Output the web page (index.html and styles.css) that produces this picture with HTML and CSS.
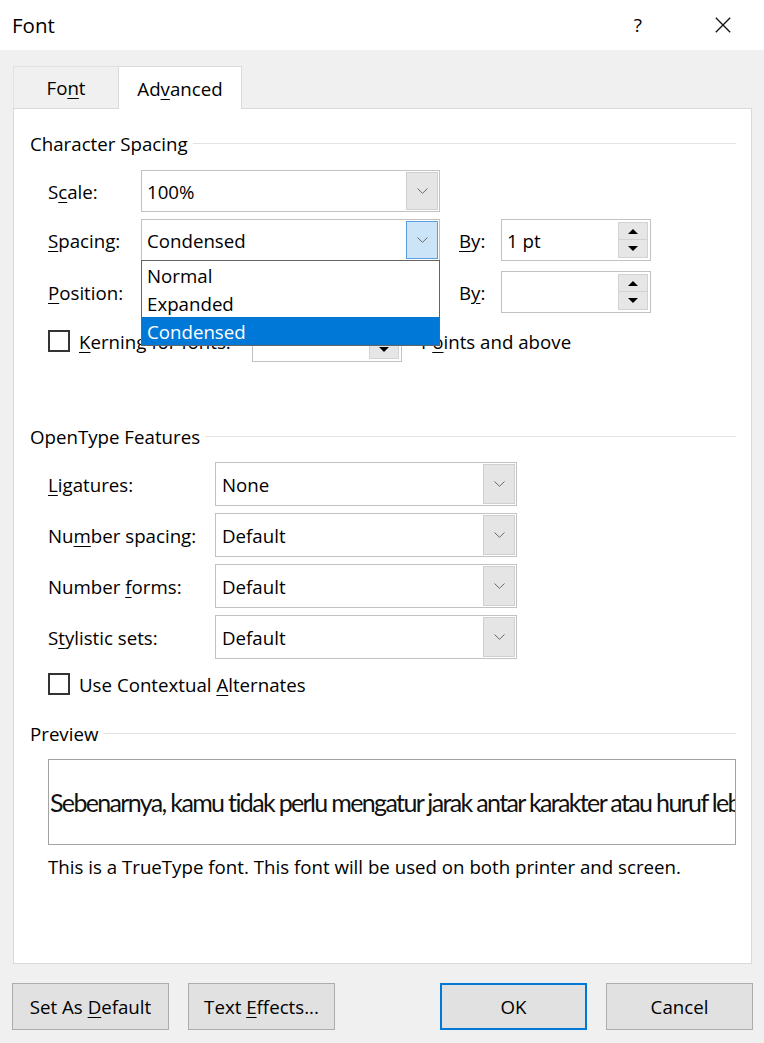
FILE: index.html
```html
<!DOCTYPE html>
<html lang="en">
<head>
<meta charset="utf-8">
<title>Font</title>
<link rel="stylesheet" href="styles.css">
</head>
<body>
<div class="dialog">
  <header class="titlebar">
    <span class="title">Font</span>
    <div class="title-ctrls">
      <span class="help">?</span>
      <svg class="close" width="16" height="16" viewBox="0 0 16 16"><path d="M0.8 0.8 L15.2 15.2 M15.2 0.8 L0.8 15.2" stroke="#111" stroke-width="1.3" fill="none"/></svg>
    </div>
  </header>

  <div class="tabs">
    <div class="tab">Fo<u>n</u>t</div>
    <div class="tab active">Ad<u>v</u>anced</div>
  </div>

  <div class="panel">
    <div class="group-head gh1"><span>Character Spacing</span><i class="rule"></i></div>

    <div class="row r-scale">
      <span class="lbl w1">S<u>c</u>ale:</span>
      <div class="combo c1"><span class="val">100%</span><span class="drop"><svg width="11" height="6" viewBox="0 0 11 6"><path d="M0.5 0.5 L5.5 5.3 L10.5 0.5" stroke="#6a6a6a" stroke-width="1" fill="none"/></svg></span></div>
    </div>

    <div class="row r-spacing">
      <span class="lbl w1"><u>S</u>pacing:</span>
      <div class="combo c1 focus"><span class="val">Condensed</span><span class="drop hot"><svg width="11" height="6" viewBox="0 0 11 6"><path d="M0.5 0.5 L5.5 5.3 L10.5 0.5" stroke="#6a6a6a" stroke-width="1" fill="none"/></svg></span>
        <ul class="list">
          <li>Normal</li>
          <li>Expanded</li>
          <li class="sel">Condensed</li>
        </ul>
      </div>
      <span class="lbl by"><u>B</u>y:</span>
      <div class="spin"><span class="val">1 pt</span><span class="spin-btns"><span class="sb"><i class="up"></i></span><span class="sb"><i class="dn"></i></span></span></div>
    </div>

    <div class="row r-position">
      <span class="lbl w1"><u>P</u>osition:</span>
      <div class="combo c1"><span class="val"></span><span class="drop"></span></div>
      <span class="lbl by">B<u>y</u>:</span>
      <div class="spin"><span class="val"></span><span class="spin-btns"><span class="sb"><i class="up"></i></span><span class="sb"><i class="dn"></i></span></span></div>
    </div>

    <div class="row r-kern">
      <span class="check"></span>
      <span class="lbl kern"><u>K</u>erning for fonts:</span>
      <div class="spin"><span class="val"></span><span class="spin-btns"><span class="sb"><i class="up"></i></span><span class="sb"><i class="dn"></i></span></span></div>
      <span class="lbl pts">P<u>o</u>ints and above</span>
    </div>

    <div class="group-head gh2"><span>OpenType Features</span><i class="rule"></i></div>

    <div class="row ot first">
      <span class="lbl w2"><u>L</u>igatures:</span>
      <div class="combo c2"><span class="val">None</span><span class="drop"><svg width="11" height="6" viewBox="0 0 11 6"><path d="M0.5 0.5 L5.5 5.3 L10.5 0.5" stroke="#6a6a6a" stroke-width="1" fill="none"/></svg></span></div>
    </div>
    <div class="row ot">
      <span class="lbl w2">Nu<u>m</u>ber spacing:</span>
      <div class="combo c2"><span class="val">Default</span><span class="drop"><svg width="11" height="6" viewBox="0 0 11 6"><path d="M0.5 0.5 L5.5 5.3 L10.5 0.5" stroke="#6a6a6a" stroke-width="1" fill="none"/></svg></span></div>
    </div>
    <div class="row ot">
      <span class="lbl w2">Number <u>f</u>orms:</span>
      <div class="combo c2"><span class="val">Default</span><span class="drop"><svg width="11" height="6" viewBox="0 0 11 6"><path d="M0.5 0.5 L5.5 5.3 L10.5 0.5" stroke="#6a6a6a" stroke-width="1" fill="none"/></svg></span></div>
    </div>
    <div class="row ot">
      <span class="lbl w2">S<u>t</u>ylistic sets:</span>
      <div class="combo c2"><span class="val">Default</span><span class="drop"><svg width="11" height="6" viewBox="0 0 11 6"><path d="M0.5 0.5 L5.5 5.3 L10.5 0.5" stroke="#6a6a6a" stroke-width="1" fill="none"/></svg></span></div>
    </div>

    <div class="row r-ctx">
      <span class="check"></span>
      <span class="lbl ctx">Use Contextual <u>A</u>lternates</span>
    </div>

    <div class="group-head gh3"><span>Preview</span><i class="rule"></i></div>

    <div class="preview"><span>Sebenarnya, kamu tidak perlu mengatur jarak antar karakter atau huruf lebih dulu.</span></div>

    <p class="desc">This is a TrueType font. This font will be used on both printer and screen.</p>
  </div>

  <div class="actions">
    <button class="btn wide">Set As <u>D</u>efault</button>
    <button class="btn">Text <u>E</u>ffects...</button>
    <span class="spacer"></span>
    <button class="btn primary">OK</button>
    <button class="btn">Cancel</button>
  </div>
</div>
</body>
</html>
```

FILE: styles.css
```css
* { box-sizing: border-box; }
html, body { margin: 0; padding: 0; }
body {
  width: 764px;
  height: 1043px;
  overflow: hidden;
  background: #f0f0f0;
  font-family: "Open Sans", "Noto Sans", sans-serif;
  font-size: 18.7px;
  color: #000;
}
u { text-decoration: underline; text-decoration-thickness: 1px; text-underline-offset: 3px; }

.titlebar {
  height: 50px;
  background: #fff;
  display: flex;
  align-items: center;
  padding-left: 12px;
}
.title { font-size: 20.5px; }
.title-ctrls { margin-left: auto; display: flex; align-items: center; }
.help { font-size: 19px; margin-right: 73px; }
.close { width: 16px; height: 16px; margin-right: 33px; }

.tabs {
  display: flex;
  align-items: flex-end;
  margin: 16px 0 0 13px;
  height: 42px;
}
.tab {
  width: 105px;
  height: 42px;
  display: flex;
  align-items: center;
  justify-content: center;
  border-top: 1px solid #e2e2e2;
  border-left: 1px solid #e2e2e2;
  background: #f0f0f0;
}
.tab.active {
  width: 124px;
  height: 43px;
  margin-bottom: -1px;
  background: #fff;
  border: 1px solid #dadada;
  border-bottom: none;
  position: relative;
  z-index: 2;
}

.panel {
  margin-left: 13px;
  width: 739px;
  height: 856px;
  background: #fff;
  border: 1px solid #dadada;
  padding: 0 15px 0 16px;
  display: flex;
  flex-direction: column;
}

.group-head { display: flex; align-items: center; height: 24px; flex: none; }
.group-head .rule { flex: 1; height: 1px; background: #e3e3e3; margin-left: 5px; }
.gh1 { margin-top: 22px; }
.gh2 { margin-top: 62px; }
.gh3 { margin-top: 25px; }

.row { display: flex; align-items: center; height: 42px; padding-left: 18px; flex: none; }
.r-scale { margin-top: 15px; }
.r-spacing { margin-top: 7px; position: relative; z-index: 3; }
.r-position { margin-top: 10px; }
.r-kern { margin-top: 7px; }

.lbl { white-space: nowrap; }
.w1 { width: 93px; }
.w2 { width: 167px; }
.by { width: 42px; margin-left: 19px; }
.kern { width: 173px; margin-left: 9px; }
.pts { margin-left: 19px; }
.ctx { margin-left: 9px; }

.combo {
  position: relative;
  display: flex;
  align-items: center;
  height: 42px;
  background: #fff;
  border: 1px solid #c2c2c2;
}
.c1 { width: 299px; }
.c2 { width: 302px; height: 44px; }
.combo .val { padding-left: 5px; }
.c2 .val { padding-left: 6px; }
.drop {
  margin-left: auto;
  margin-right: 1px;
  width: 32px;
  height: 38px;
  background: #e5e5e5;
  border: 1px solid #cfcfcf;
  display: flex;
  align-items: center;
  justify-content: center;
}
.c2 .drop { height: 40px; }
.drop.hot { background: #cce4f7; border-color: #5b9fdf; }
.drop svg { display: block; }

.list {
  position: absolute;
  top: 100%;
  left: -1px;
  right: -1px;
  margin: 0;
  padding: 0;
  list-style: none;
  background: #fff;
  border: 1px solid #646464;
  z-index: 5;
}
.list li { height: 28px; line-height: 30px; padding-left: 5px; }
.list li.sel { background: #0078d7; color: #fff; }

.spin {
  display: flex;
  align-items: center;
  width: 150px;
  height: 42px;
  border: 1px solid #c2c2c2;
  background: #fff;
}
.spin .val { padding-left: 5px; }
.spin-btns {
  margin-left: auto;
  margin-right: 2px;
  display: flex;
  flex-direction: column;
}
.sb {
  width: 30px;
  height: 18px;
  background: #e6e6e6;
  border: 1px solid #d2d2d2;
  display: flex;
  align-items: center;
  justify-content: center;
}
.sb + .sb { border-top: none; }
.up { width: 0; height: 0; border-left: 5px solid transparent; border-right: 5px solid transparent; border-bottom: 5px solid #000; }
.dn { width: 0; height: 0; border-left: 5px solid transparent; border-right: 5px solid transparent; border-top: 5px solid #000; }

.check {
  width: 22px;
  height: 22px;
  border: 2px solid #333;
  background: #fff;
  flex: none;
}

.ot { height: 44px; margin-top: 7px; }
.ot.first { margin-top: 14px; }
.r-ctx { height: 24px; margin-top: 13px; }

.preview {
  margin: 14px 0 0 18px;
  height: 86px;
  border: 1px solid #a2a2a2;
  display: flex;
  align-items: center;
  overflow: hidden;
  flex: none;
}
.preview span {
  font-family: "Lato", "Open Sans", sans-serif;
  font-size: 25px;
  letter-spacing: -1.65px;
  white-space: nowrap;
  padding-left: 1px;
  color: #111;
}

.desc { margin: 11px 0 0 18px; line-height: 22px; }

.actions {
  display: flex;
  margin-top: 19px;
  padding: 0 11px 0 12px;
  gap: 19px;
}
.spacer { flex: 1; }
.btn {
  width: 147px;
  height: 47px;
  background: #e1e1e1;
  border: 1px solid #adadad;
  font-family: "Open Sans", "Noto Sans", sans-serif;
  font-size: 18.7px;
  color: #000;
  padding: 0;
}
.btn.wide { width: 157px; }
.btn.primary { border: 2px solid #0078d7; }
```
